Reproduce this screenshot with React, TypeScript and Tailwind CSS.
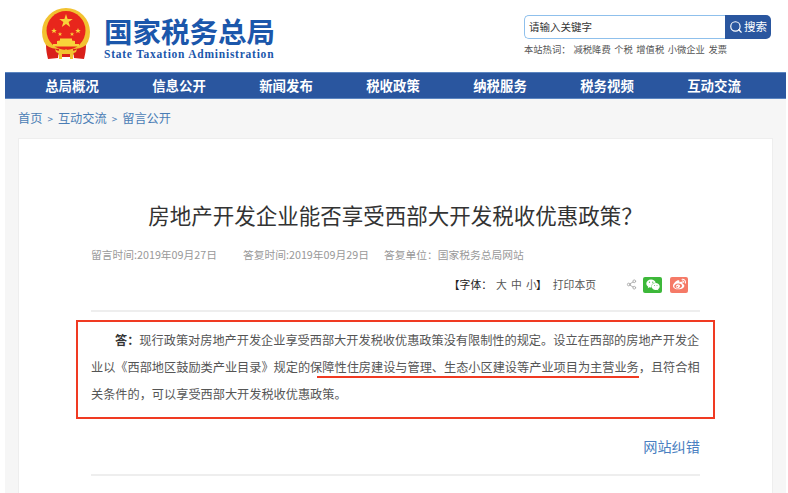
import { Search, Share2 } from 'lucide-react'
import { FaWeibo, FaWeixin } from 'react-icons/fa'

const navItems = ['总局概况', '信息公开', '新闻发布', '税收政策', '纳税服务', '税务视频', '互动交流']
const hotWords = ['减税降费', '个税', '增值税', '小微企业', '发票']

function Emblem() {
  return (
    <svg width="50" height="52" viewBox="0 0 50 52" className="shrink-0">
      <circle cx="25" cy="24" r="24" fill="#f2c230" />
      <circle cx="25" cy="22.5" r="19.5" fill="#e8261c" />
      <path d="M25 6l1.6 5h5.2l-4.2 3 1.6 5-4.2-3-4.2 3 1.6-5-4.2-3h5.2z" fill="#f8d33a" />
      <path d="M13 20l.8 2h2l-1.6 1.3.6 2-1.8-1.2-1.8 1.2.6-2-1.6-1.3h2zM37 20l.8 2h2l-1.6 1.3.6 2-1.8-1.2-1.8 1.2.6-2-1.6-1.3h2zM19 24l.6 1.5h1.6l-1.3 1 .5 1.6-1.4-1-1.4 1 .5-1.6-1.3-1h1.6zM31 24l.6 1.5h1.6l-1.3 1 .5 1.6-1.4-1-1.4 1 .5-1.6-1.3-1h1.6z" fill="#f8d33a" />
      <path d="M16 36h18v-3l-3-.5v-2h-12v2l-3 .5zM12 36h26v2.5H12z" fill="#f8d33a" />
      <path d="M5 37c4 3 9 4 13 4l-1 9-10 1c-1-4-2-9-2-14zM45 37c-4 3-9 4-13 4l1 9 10 1c1-4 2-9 2-14z" fill="#d9201a" />
      <path d="M14 41c4 3 8 3 11 0 3 3 7 3 11 0l-1 3c-4 2-8 2-10 0-2 2-6 2-10 0zM18 45h3v6h-3zM29 45h3v6h-3z" fill="#f2c230" />
      <path d="M21 46h8v3h-8z" fill="#d9201a" />
    </svg>
  )
}

function Header() {
  return (
    <div className="flex h-[72px] items-start justify-between pl-[41px] pr-[17px]">
      <div className="flex gap-[13px] pt-[8px]">
        <Emblem />
        <div className="pt-[8px]">
          <div className="text-[28.5px] leading-[30px] font-bold text-[#1b57ab]">国家税务总局</div>
          <div className="mt-[2px] font-['Liberation_Serif',serif] text-[11.5px] leading-[13px] font-bold tracking-[0.76px] text-[#1b57ab]">State Taxation Administration</div>
        </div>
      </div>
      <div className="w-[247px] pt-[15px]">
        <div className="flex h-[24px]">
          <div className="flex flex-1 items-center rounded-l-[5px] border border-r-0 border-[#8fc0ec] pl-[4px] text-[10.5px] text-[#333]">请输入关键字</div>
          <div className="flex w-[46px] items-center justify-center gap-[1px] rounded-r-[5px] bg-[#2a569f] text-[11.5px] text-white">
            <Search size={14} strokeWidth={2} />
            <span>搜索</span>
          </div>
        </div>
        <div className="mt-[3px] flex text-[9.3px] leading-[14px] text-[#555]">
          <span className="mr-[3px]">本站热词&#xFF1A;</span>
          <div className="flex gap-[3.5px]">
            {hotWords.map((word) => (
              <span key={word}>{word}</span>
            ))}
          </div>
        </div>
      </div>
    </div>
  )
}

function Nav() {
  return (
    <div className="grid h-[27px] grid-cols-[repeat(7,107px)] items-center border-y border-[#5b85c0] bg-[#2a569f] pl-[13.5px]">
      {navItems.map((item) => (
        <div key={item} className="text-center text-[13.4px] font-bold text-white">
          {item}
        </div>
      ))}
    </div>
  )
}

function Answer() {
  return (
    <div className="mx-[-15px] mt-[8px] h-[99px] border-[2px] border-[#f03a22] pt-[5px] pr-[13px] pl-[13px] text-[12.18px] leading-[27px] text-[#555]">
      <p className="indent-[24px]">
        <b className="text-[#333]">答&#xFF1A;</b>现行政策对房地产开发企业享受西部大开发税收优惠政策没有限制性的规定。设立在西部的房地产开发企业以《西部地区鼓励类产业目录》规定的
        <span className="relative">
          保障性住房建设与管理、生态小区建设等产业项目为主营业务
          <span className="absolute right-0 bottom-[-2px] left-[7px] h-[2px] bg-[#f03a22]" />
        </span>
        &#xFF0C;且符合相关条件的&#xFF0C;可以享受西部大开发税收优惠政策。
      </p>
    </div>
  )
}

export default function App() {
  return (
    <div className="h-[493px] overflow-hidden bg-white font-['Noto_Sans_CJK_SC',sans-serif]">
      <Header />
      <div className="mx-[5px] w-[781px] bg-[#f6f6f6]">
        <Nav />
        <div className="flex h-[39px] items-center gap-[5px] pb-[1px] pl-[13px] text-[12.2px] text-[#4a7db5]">
          <span>首页</span>
          <span className="text-[10px]">&gt;</span>
          <span>互动交流</span>
          <span className="text-[10px]">&gt;</span>
          <span>留言公开</span>
        </div>
        <div className="mx-[13px] h-[356px] w-[755px] border border-[#eeeeee] bg-white px-[72px]">
          <h1 className="mt-[62px] text-center text-[21.5px] leading-[28px] font-normal text-[#333]">房地产开发企业能否享受西部大开发税收优惠政策&#xFF1F;</h1>
          <div className="mt-[18px] flex text-[10.75px] leading-[16px] text-[#999]">
            <span>留言时间:2019年09月27日</span>
            <span className="ml-[26px]">答复时间:2019年09月29日</span>
            <span className="ml-[15px]">答复单位&#xFF1A;国家税务总局网站</span>
          </div>
          <div className="mt-[9px] flex h-[40px] items-center justify-end border-b-[2px] border-[#eeeeee] pr-[12px] pb-[13px] text-[10.8px] text-[#555]">
            <span className="text-[#222]">【字体&#xFF1A;</span>
            <span className="ml-[4px] tracking-[4.2px]">大中小</span>
            <span className="ml-[-5px] text-[#222]">】</span>
            <span className="ml-[6px]">打印本页</span>
            <Share2 size={11} className="ml-[30px] text-[#aaa]" />
            <span className="ml-[6px] flex h-[16px] w-[19px] items-center justify-center rounded-[2px] bg-[#3db83a] text-white">
              <FaWeixin size={14} />
            </span>
            <span className="ml-[8px] flex h-[16px] w-[18px] items-center justify-center rounded-[2px] bg-[#f57a67] text-white">
              <FaWeibo size={13} />
            </span>
          </div>
          <Answer />
          <div className="mt-[13px] text-right text-[14.2px] leading-[28px] text-[#4a7fc1]">网站纠错</div>
          <div className="mt-[14px] border-t-[2px] border-[#eeeeee]" />
        </div>
      </div>
    </div>
  )
}
